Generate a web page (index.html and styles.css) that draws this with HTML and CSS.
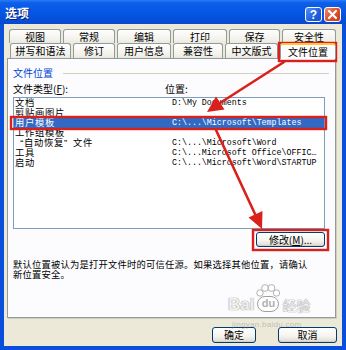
FILE: index.html
```html
<!DOCTYPE html>
<html>
<head>
<meta charset="utf-8">
<link rel="stylesheet" href="styles.css">
</head>
<body>
<div class="window">
  <div class="titlebar">
    <span class="title">选项</span>
    <div class="tbtns">
      <span class="tb help">?</span>
      <span class="tb close"><svg width="11" height="11" viewBox="0 0 11 11"><path d="M2 2L9 9M9 2L2 9" stroke="#fff" stroke-width="2.2" stroke-linecap="round"/></svg></span>
    </div>
  </div>
  <div class="frame">
    <div class="tabs">
      <div class="tabrow row1">
        <div class="tab w52">视图</div>
        <div class="tab w52">常规</div>
        <div class="tab w54">编辑</div>
        <div class="tab w54">打印</div>
        <div class="tab w51">保存</div>
        <div class="tab w54">安全性</div>
      </div>
      <div class="tabrow row2">
        <div class="tab w61">拼写和语法</div>
        <div class="tab w42">修订</div>
        <div class="tab w54">用户信息</div>
        <div class="tab w50">兼容性</div>
        <div class="tab w53">中文版式</div>
        <div class="tab w56 active">文件位置</div>
      </div>
    </div>
    <div class="panel">
      <div class="group"><span class="gtitle">文件位置</span><i class="rule"></i></div>
      <div class="labels"><span class="c1">文件类型(<u>F</u>):</span><span class="c2">位置:</span></div>
      <div class="list">
        <div class="item"><span class="k">文档</span><span class="v">D:\My Documents</span></div>
        <div class="item"><span class="k">剪贴画图片</span><span class="v"></span></div>
        <div class="item sel"><span class="k">用户模板</span><span class="v">C:\...\Microsoft\Templates</span></div>
        <div class="item"><span class="k">工作组模板</span><span class="v"></span></div>
        <div class="item"><span class="k"><span class="q qo">“</span>自动恢复<span class="q qc">”</span>文件</span><span class="v">C:\...\Microsoft\Word</span></div>
        <div class="item"><span class="k">工具</span><span class="v">C:\...Microsoft Office\OFFIC…</span></div>
        <div class="item"><span class="k">启动</span><span class="v">C:\...\Microsoft\Word\STARTUP</span></div>
      </div>
      <div class="modrow"><button class="btn mod">修改(<u>M</u>)...</button></div>
      <p class="note">默认位置被认为是打开文件时的可信任源。如果选择其他位置，请确认<br>新位置安全。</p>
    </div>
    <div class="footer">
      <button class="btn ok">确定</button>
      <button class="btn cancel">取消</button>
    </div>
  </div>

  <div class="watermark">
    <div class="wmline">
      <span class="bai">Bai</span>
      <span class="paw">
        <svg width="26" height="14" viewBox="0 0 26 14"><circle cx="5" cy="9" r="3.2"/><circle cx="10" cy="4" r="3.4"/><circle cx="16.5" cy="4" r="3.4"/><circle cx="21.5" cy="9" r="3.2"/></svg>
        <span class="du">du</span>
      </span>
      <span class="jy">经验</span>
    </div>
    <div class="url">jingyan.baidu.com</div>
  </div>

  <svg class="annot" width="346" height="350" viewBox="0 0 346 350">
    <g fill="none" stroke="#D9201A" stroke-width="2.4">
      <rect x="279" y="43" width="57" height="18"/>
      <rect x="11" y="117" width="315" height="12"/>
      <rect x="253" y="230" width="75" height="20"/>
    </g>
    <g stroke="#D9201A" stroke-width="2.6" stroke-linecap="round">
      <line x1="284" y1="62" x2="220" y2="103"/>
      <line x1="216" y1="130" x2="255" y2="214"/>
    </g>
    <g fill="#D9201A">
      <polygon points="207,112 224.5,109.5 216,96.5"/>
      <polygon points="262,229 262.5,211 248.5,217.5"/>
    </g>
  </svg>
</div>
</body>
</html>
```

FILE: styles.css
```css
* { box-sizing: border-box; }
html, body { margin: 0; padding: 0; }
body {
  width: 346px;
  height: 350px;
  overflow: hidden;
  font-family: "Noto Sans CJK SC", "Liberation Sans", sans-serif;
  font-size: 10px;
  color: #000;
}
.window {
  position: relative;
  width: 346px;
  height: 350px;
  display: flex;
  flex-direction: column;
  background: #0A4FDC;
}
.titlebar {
  height: 24px;
  flex: none;
  display: flex;
  align-items: flex-start;
  padding: 0 5px 0 5px;
  background: linear-gradient(#2A7CF6 0%, #0D5EEA 12%, #0757E6 45%, #0450DC 80%, #0A48C8 100%);
}
.title {
  color: #fff;
  font-weight: bold;
  font-size: 12px;
  line-height: 26px;
  text-shadow: 1px 1px 0 #0A1E7A;
}
.tbtns {
  margin-left: auto;
  margin-top: 7px;
  display: flex;
  gap: 2px;
}
.tb {
  width: 17px;
  height: 15px;
  border: 1px solid #fff;
  border-radius: 3px;
  display: flex;
  align-items: center;
  justify-content: center;
  color: #fff;
  font-family: "Liberation Sans", sans-serif;
  font-weight: bold;
  font-size: 12px;
}
.help { background: linear-gradient(135deg, #4F92F8, #1F5FE0 60%, #1550D0); }
.close { background: linear-gradient(135deg, #F09070, #E0502A 50%, #C63A18); }

.frame {
  flex: 1;
  background: #ECE9D8;
  margin: 0 4px 4px;
  display: flex;
  flex-direction: column;
}
.tabs { padding-top: 5px; }
.tabrow { display: flex; gap: 2px; }
.row1 { padding-left: 5px; height: 14px; }
.row2 { padding-left: 6px; height: 15px; }
.tab {
  height: 100%;
  border: 1px solid #919B9C;
  border-bottom: none;
  border-radius: 3px 3px 0 0;
  background: linear-gradient(#FEFEFE, #F3F2EC 70%, #EAE8DF);
  text-align: center;
  line-height: 13px;
  white-space: nowrap;
}
.row2 .tab { line-height: 14px; }
.tab.active { background: #FCFCFE; height: 16px; position: relative; z-index: 1; border-top: 2px solid #FFC83C; line-height: 13px; }
.w42 { width: 42px; } .w50 { width: 50px; } .w51 { width: 51px; } .w52 { width: 52px; }
.w53 { width: 53px; } .w54 { width: 54px; } .w56 { width: 56px; } .w61 { width: 61px; }

.panel {
  margin-left: 3px;
  width: 329px;
  height: 260px;
  background: #FCFCFE;
  border: 1px solid #919B9C;
  box-shadow: 1px 1px 0 #D0CEBF;
  padding: 9px 0 0 5px;
}
.group { display: flex; align-items: center; height: 10px; line-height: 10px; }
.gtitle { color: #0046D5; }
.rule { flex: 1; height: 1px; background: #D0D0BF; margin-left: 10px; margin-right: 6px; }
.labels { display: flex; margin-top: 6px; height: 10px; line-height: 10px; }
.c1 { width: 152px; }
.list {
  margin-top: 3px;
  width: 312px;
  height: 132px;
  border: 1px solid #7F9DB9;
  background: #fff;
}
.item {
  display: flex; align-items: center; height: 10px; line-height: 10px; padding-left: 1px; white-space: nowrap;
  font-family: "Liberation Sans", "Noto Sans CJK SC", sans-serif;
  font-size: 9.3px;
}
.item .k { width: 157px; letter-spacing: 0.7px; }
.q { display: inline-block; width: 9px; }
.qo { text-align: right; }
.qc { text-align: left; }
.item .v { font-family: "Liberation Mono", monospace; font-size: 8.3px; }
.item.sel { background: #316AC5; color: #fff; }
.modrow { width: 312px; display: flex; justify-content: flex-end; margin-top: 3px; }
.btn {
  font-family: "Noto Sans CJK SC", "Liberation Sans", sans-serif;
  font-size: 10px;
  line-height: 12px;
  padding: 0;
  color: #000;
  border: 1px solid #003C74;
  border-radius: 3px;
  background: linear-gradient(#FFFFFF, #F4F3EE 60%, #E3E0D6 90%, #D6D0C5);
  box-shadow: inset 0 -1px 0 #D6D0C5;
}
.mod { width: 69px; height: 15px; }
.note {
  margin: 13px 0 0; line-height: 10px; white-space: nowrap;
  font-family: "Liberation Sans", "Noto Sans CJK SC", sans-serif;
  font-size: 9.3px;
  letter-spacing: 0.2px;
}
.footer { display: flex; justify-content: flex-end; gap: 22px; margin-top: 9px; padding-right: 5px; }
.ok { width: 44px; height: 16px; }
.cancel { width: 59px; height: 16px; }

.annot { position: absolute; left: 0; top: 0; pointer-events: none; }

.watermark {
  position: absolute;
  left: 228px;
  top: 284px;
  width: 100px;
  pointer-events: none;
  color: rgba(255,255,255,0.9);
}
.wmline { display: flex; align-items: flex-end; height: 30px; }
.bai {
  font-family: "Liberation Sans", sans-serif;
  font-weight: bold;
  font-size: 17px;
  line-height: 18px;
  text-shadow: 0 0 1px #8E8E8E, 0 0 1px #8E8E8E;
}
.paw { position: relative; width: 28px; height: 30px; display: flex; flex-direction: column; align-items: center; }
.paw svg { fill: rgba(255,255,255,0.9); stroke: #A0A0A0; stroke-width: 0.8; }
.du {
  margin-top: -2px;
  width: 22px; height: 16px; border-radius: 9px;
  background: rgba(255,255,255,0.9);
  border: 1px solid #A0A0A0;
  color: #B0B0B0;
  font-family: "Liberation Sans", sans-serif; font-weight: bold; font-size: 11px; line-height: 13px; text-align: center;
}
.jy { font-size: 14px; line-height: 18px; text-shadow: 0 0 1px #8E8E8E, 0 0 1px #8E8E8E; }
.url {
  margin-top: 6px;
  margin-left: 4px;
  font-family: "Liberation Sans", sans-serif;
  font-size: 8px;
  line-height: 9px;
  color: rgba(150,150,150,0.55);
  letter-spacing: 0.3px;
}
```
